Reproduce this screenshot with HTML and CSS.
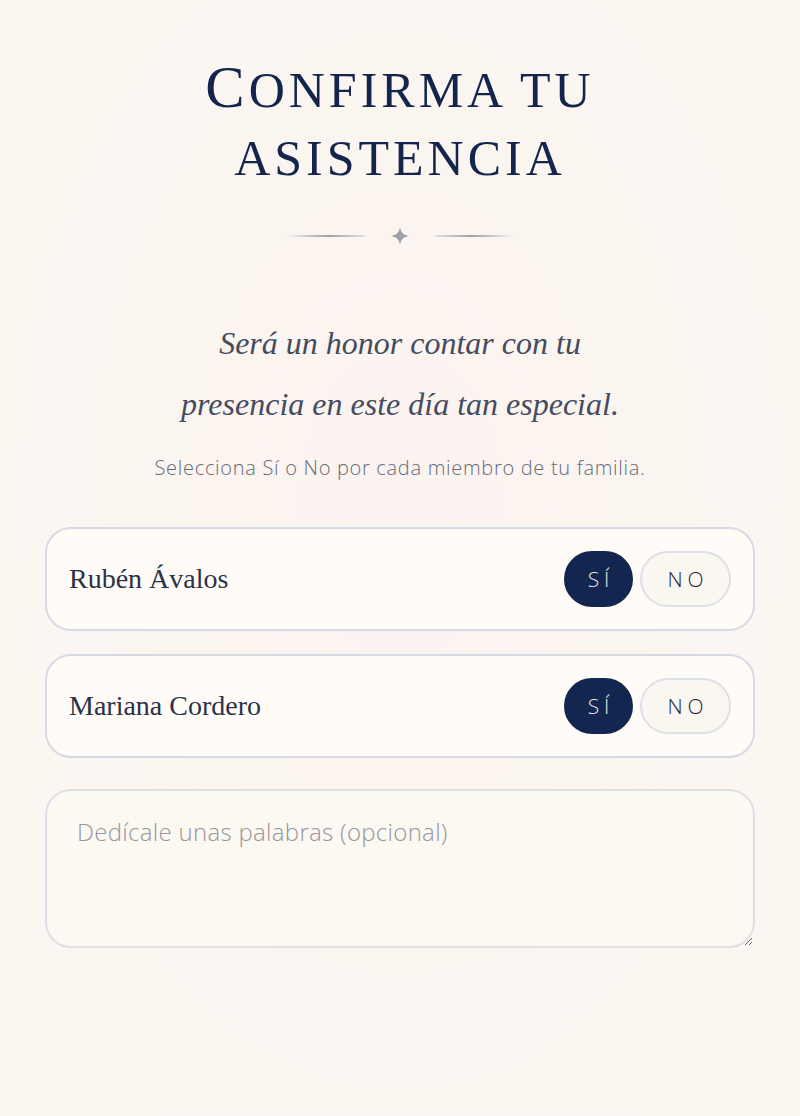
FILE: index.html
```html
<!DOCTYPE html>
<html lang="es">
<head>
<meta charset="utf-8">
<title>Confirma tu asistencia</title>
<link rel="stylesheet" href="styles.css">
</head>
<body>
<main class="rsvp">
  <h1 class="title"><span class="initial">C</span>onfirma tu asistencia</h1>
  <div class="divider">
    <span class="line line-left"></span>
    <svg class="star" width="18" height="18" viewBox="0 0 18 18" aria-hidden="true"><path d="M9 0 C9.8 5.5 12.5 8.2 18 9 C12.5 9.8 9.8 12.5 9 18 C8.2 12.5 5.5 9.8 0 9 C5.5 8.2 8.2 5.5 9 0 Z" fill="#9ba1ab"/></svg>
    <span class="line line-right"></span>
  </div>
  <p class="lead">Será un honor contar con tu presencia en este día tan especial.</p>
  <p class="hint">Selecciona Sí o No por cada miembro de tu familia.</p>
  <div class="guests">
    <div class="guest">
      <span class="guest-name">Rubén Ávalos</span>
      <div class="choice">
        <button class="pill pill-yes is-active">SÍ</button>
        <button class="pill pill-no">NO</button>
      </div>
    </div>
    <div class="guest">
      <span class="guest-name">Mariana Cordero</span>
      <div class="choice">
        <button class="pill pill-yes is-active">SÍ</button>
        <button class="pill pill-no">NO</button>
      </div>
    </div>
  </div>
  <textarea class="message" placeholder="Dedícale unas palabras (opcional)"></textarea>
</main>
</body>
</html>
```
FILE: styles.css
```css
html, body {
  margin: 0;
  padding: 0;
}
body {
  min-height: 1116px;
  background: radial-gradient(ellipse at 50% 45%, #fbf3ef 0%, #fbf6f1 60%, #faf6f0 100%);
  color: #1a2a4f;
}
.rsvp {
  width: 710px;
  margin: 0 auto;
  padding-top: 53px;
  display: flex;
  flex-direction: column;
  align-items: stretch;
}
.title {
  margin: 0;
  text-align: center;
  font-family: "Liberation Serif", serif;
  font-weight: 400;
  font-size: 50px;
  line-height: 68px;
  letter-spacing: 4px;
  text-transform: uppercase;
  color: #14254d;
}
.initial {
  font-size: 59px;
  letter-spacing: 4px;
}
.divider {
  margin-top: 33px;
  display: flex;
  justify-content: center;
  align-items: center;
  gap: 26px;
  height: 22px;
}
.line {
  width: 80px;
  height: 2px;
}
.line-left {
  background: linear-gradient(90deg, rgba(150,150,155,0), rgba(150,150,155,0.9) 55%, rgba(150,150,155,0.2));
}
.line-right {
  background: linear-gradient(90deg, rgba(150,150,155,0.2), rgba(150,150,155,0.9) 45%, rgba(150,150,155,0));
}
.star {
  display: block;
}
.lead {
  margin: 66px auto 0;
  max-width: 460px;
  text-align: center;
  font-family: "Liberation Serif", serif;
  font-style: italic;
  font-size: 32px;
  line-height: 61px;
  color: #464b60;
}
.hint {
  margin: 20px 0 0;
  text-align: center;
  font-family: "Open Sans", sans-serif;
  font-weight: 300;
  font-size: 20px;
  line-height: 26px;
  letter-spacing: 0.7px;
  color: #666a7a;
}
.guests {
  margin-top: 46px;
  display: flex;
  flex-direction: column;
  gap: 23px;
}
.guest {
  box-sizing: border-box;
  height: 104px;
  border: 2px solid #d6dae4;
  border-radius: 26px;
  background: #fffcf8;
  display: flex;
  align-items: center;
  justify-content: space-between;
  padding: 0 22px 0 22px;
}
.guest-name {
  font-family: "Liberation Serif", serif;
  font-size: 28px;
  color: #2b3149;
}
.choice {
  display: flex;
  gap: 7px;
}
.pill {
  box-sizing: border-box;
  height: 56px;
  border-radius: 28px;
  font-family: "Open Sans", sans-serif;
  font-weight: 300;
  font-size: 21px;
  letter-spacing: 5px;
  padding: 0 0 0 5px;
  cursor: pointer;
}
.pill-yes {
  width: 69px;
  border: 2px solid #13264f;
  background: #13264f;
  color: #ebe6de;
}
.pill-no {
  width: 91px;
  border: 2px solid #dde0e8;
  background: #faf6f0;
  color: #23283e;
}
.message {
  box-sizing: border-box;
  margin-top: 31px;
  width: 710px;
  height: 159px;
  border: 2px solid #dde0e7;
  border-radius: 26px;
  background: #fcf8f2;
  padding: 24px 30px;
  font-family: "Open Sans", sans-serif;
  font-weight: 300;
  font-size: 24px;
  letter-spacing: 0.3px;
  color: #3a3f52;
  outline: none;
}
.message::placeholder {
  color: #96969c;
}
```
